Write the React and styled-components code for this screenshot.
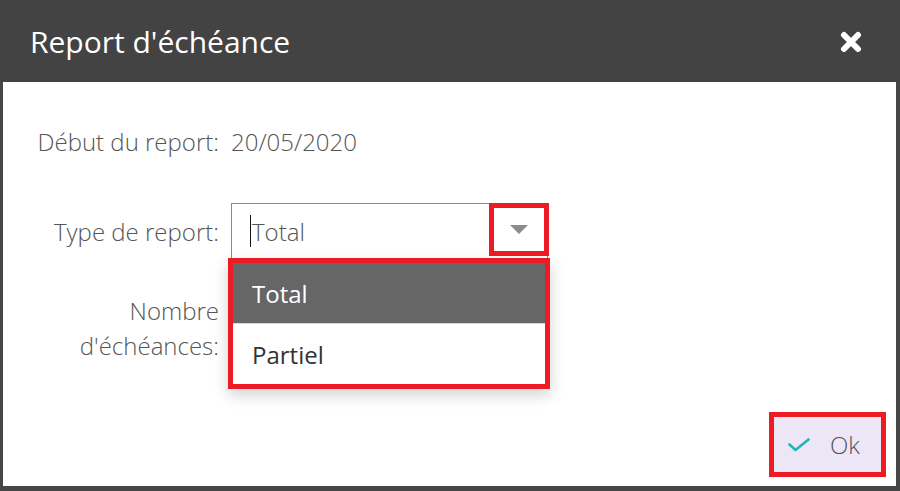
import React from 'react';
import styled, { createGlobalStyle } from 'styled-components';

const GlobalStyle = createGlobalStyle`
  html, body {
    margin: 0;
    padding: 0;
    background: #464646;
  }
  body {
    font-family: "Open Sans", "Liberation Sans", sans-serif;
  }
`;

const Modal = styled.div`
  width: 900px;
  height: 491px;
  display: flex;
  flex-direction: column;
  background: #464646;
  box-sizing: border-box;
`;

const Header = styled.div`
  height: 82px;
  flex-shrink: 0;
  display: flex;
  align-items: center;
  justify-content: space-between;
  padding: 0 38px 0 30px;
  background: #434343;
  color: #fff;
`;

const Title = styled.h1`
  margin: 0;
  font-size: 30px;
  font-weight: 400;
`;

const CloseButton = styled.button`
  border: 0;
  padding: 0;
  margin-top: 2px;
  background: none;
  width: 22px;
  height: 22px;
  cursor: pointer;
  display: flex;
`;

const Body = styled.div`
  flex: 1;
  margin: 0 4px 5px 3px;
  background: #fff;
  display: flex;
  flex-direction: column;
  justify-content: space-between;
`;

const Form = styled.div`
  display: flex;
  flex-direction: column;
  gap: 34px;
  padding-top: 31px;
`;

const Row = styled.div`
  display: grid;
  grid-template-columns: 216px 317px;
  column-gap: 12px;
  align-items: center;
  min-height: 56px;
`;

const Label = styled.div`
  text-align: right;
  font-size: 24px;
  font-weight: 300;
  line-height: 35px;
  color: #555;
  white-space: nowrap;
`;

const Value = styled.div`
  font-size: 24px;
  font-weight: 300;
  color: #555;
`;

const Field = styled.div`
  position: relative;
  height: 56px;
`;

const Select = styled.div`
  height: 56px;
  box-sizing: border-box;
  border: 1px solid #8a8a8a;
  display: flex;
  align-items: flex-start;
  background: #fff;
`;

const SelectText = styled.div`
  flex: 1;
  align-self: center;
  display: flex;
  align-items: center;
  padding-left: 18px;
  font-size: 24px;
  font-weight: 300;
  color: #555;
`;

const Caret = styled.span`
  width: 1px;
  height: 32px;
  background: #111;
  margin-right: 1px;
`;

const ArrowCell = styled.div`
  width: 60px;
  height: 53px;
  margin: -1px -2px 0 0;
  box-sizing: border-box;
  border: ${p => (p.$marked ? '5px solid #ed1c24' : '0')};
  display: flex;
  align-items: center;
  justify-content: center;
`;

const Menu = styled.ul`
  position: absolute;
  top: 55px;
  left: -3px;
  width: 322px;
  margin: 0;
  padding: 0;
  list-style: none;
  box-sizing: border-box;
  border: 5px solid #ed1c24;
  background: #fff;
  box-shadow: 0 6px 14px rgba(0, 0, 0, 0.18);
  z-index: 2;
`;

const Option = styled.li`
  height: 60px;
  display: flex;
  align-items: center;
  padding-left: 19px;
  font-size: 24px;
  color: ${p => (p.$active ? '#fff' : '#333')};
  background: ${p => (p.$active ? '#666' : '#fff')};
  border-bottom: ${p => (p.$active ? '1px solid #d6d6d6' : '0')};
`;

const Footer = styled.div`
  display: flex;
  justify-content: flex-end;
  padding: 0 10px 9px 0;
`;

const OkButton = styled.button`
  width: 117px;
  height: 65px;
  box-sizing: border-box;
  border: 5px solid #ed1c24;
  background: #ece6f6;
  display: flex;
  align-items: center;
  gap: 20px;
  padding: 0 0 0 14px;
  font-family: inherit;
  font-size: 24px;
  font-weight: 300;
  color: #555;
  cursor: pointer;
`;

const options = ['Total', 'Partiel'];

export default function App() {
  return (
    <>
      <GlobalStyle />
      <Modal>
        <Header>
          <Title>Report d'échéance</Title>
          <CloseButton aria-label="Fermer">
            <svg width="22" height="22" viewBox="0 0 22 22">
              <path d="M4 4 L18 18 M18 4 L4 18" stroke="#fff" strokeWidth="6" strokeLinecap="round" />
            </svg>
          </CloseButton>
        </Header>
        <Body>
          <Form>
            <Row>
              <Label>Début du report:</Label>
              <Value>20/05/2020</Value>
            </Row>
            <Row>
              <Label>Type de report:</Label>
              <Field>
                <Select>
                  <SelectText>
                    <Caret />
                    Total
                  </SelectText>
                  <ArrowCell $marked>
                    <svg width="18" height="9" viewBox="0 0 18 9">
                      <path d="M0 0 H18 L9 9 Z" fill="#8c8c8c" />
                    </svg>
                  </ArrowCell>
                </Select>
                <Menu>
                  {options.map(opt => (
                    <Option key={opt} $active={opt === 'Total'}>
                      {opt}
                    </Option>
                  ))}
                </Menu>
              </Field>
            </Row>
            <Row>
              <Label>
                Nombre
                <br />
                d'échéances:
              </Label>
              <Field />
            </Row>
          </Form>
          <Footer>
            <OkButton>
              <svg width="22" height="14" viewBox="0 0 22 14">
                <path d="M1.5 6.5 L7.5 12 L20.5 1.5" fill="none" stroke="#27b4b8" strokeWidth="2.6" strokeLinecap="round" strokeLinejoin="round" />
              </svg>
              Ok
            </OkButton>
          </Footer>
        </Body>
      </Modal>
    </>
  );
}
